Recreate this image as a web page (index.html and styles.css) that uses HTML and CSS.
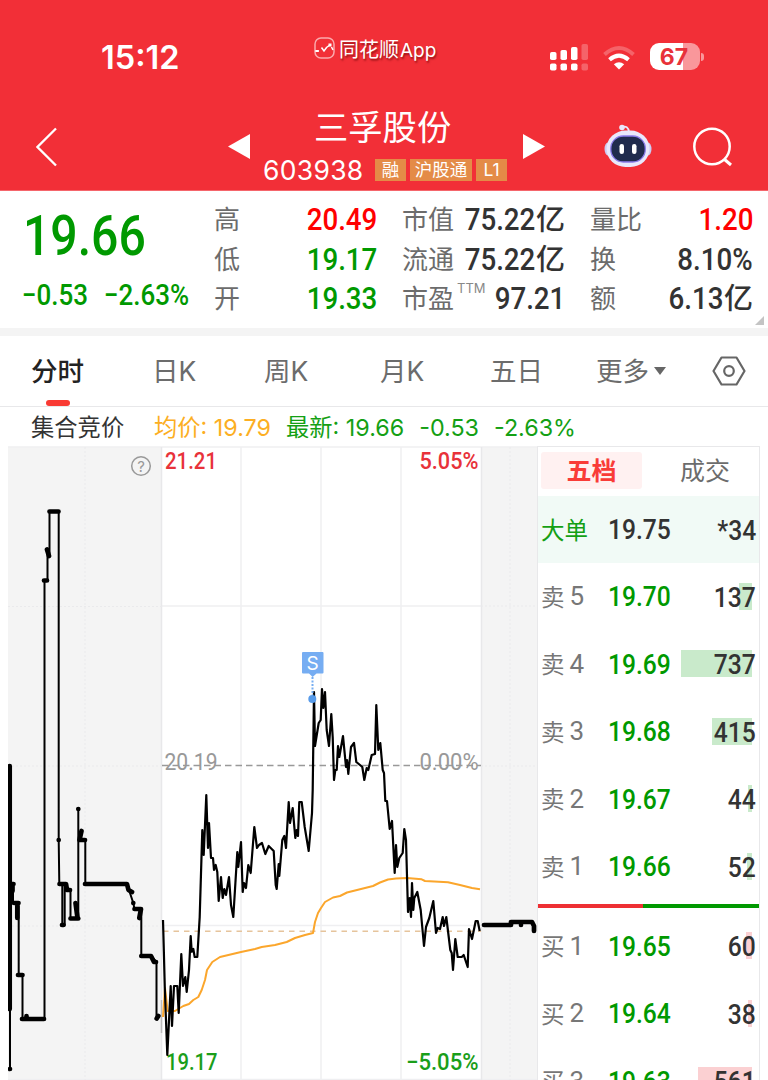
FILE: index.html
```html
<!DOCTYPE html>
<html lang="zh-CN">
<head>
  <meta charset="UTF-8" />
  <meta name="viewport" content="width=device-width, initial-scale=1.0" />
  <title>三孚股份 603938</title>
  <link rel="stylesheet" href="styles.css">
</head>
<body>
  <header class="header">
    <div class="status">
      <span class="time">15:12</span>
      <div class="app-name">
        <svg width="21" height="22" viewBox="0 0 21 22" fill="none">
          <rect x="1" y="1" width="19" height="20" rx="6" stroke="#fba9ac" stroke-width="1.500" />
          <path d="M1.500 14 H5 M7.500 10.500 L10 14 L12.500 10.500 L16 8 M17.500 10 L19 13" stroke="#fff" stroke-width="1.500" />
          <path d="M1.500 13h3v2h-3z M14.500 6.500h3v3h-3z" fill="#fff" />
        </svg>
        <span>同花顺<i>App</i></span>
      </div>
      <svg class="signal" width="38" height="28" viewBox="0 0 38 28" fill="#fff">
        <rect x="0" y="9" width="6.500" height="8" rx="1.800" />
        <rect x="10.500" y="7" width="6.500" height="10" rx="1.800" />
        <rect x="21" y="4" width="6.500" height="13" rx="1.800" />
        <rect x="31.500" y="1" width="6.500" height="16" rx="1.800" opacity=".25" />
        <rect x="0" y="20.500" width="6.500" height="7" rx="1.800" />
        <rect x="10.500" y="20.500" width="6.500" height="7" rx="1.800" />
        <rect x="21" y="20.500" width="6.500" height="7" rx="1.800" />
        <rect x="31.500" y="20.500" width="6.500" height="7" rx="1.800" opacity=".25" />
      </svg>
      <svg class="wifi" width="34" height="26" viewBox="0 0 34 26" fill="none" stroke="#fff" stroke-width="4">
        <path d="M2.500 9.500 Q17 -3.500 31.500 9.500" opacity=".25" />
        <path d="M7.500 14.700 Q17 6.500 26.500 14.700" />
        <path d="M11.800 19.300 Q17 15 22.200 19.300 L17 24.500Z" fill="#fff" stroke="none" />
      </svg>
      <div class="battery">67</div>
    </div>
    <div class="title-bar">
      <svg class="back" width="22" height="40" viewBox="0 0 22 40" fill="none" stroke="#fff" stroke-width="2.300">
        <path d="M20 1.500 L1.500 20 L20 38.500" />
      </svg>
      <svg class="prev" width="22" height="25" viewBox="0 0 22 25"><path d="M0 12.500 L22 0 V25Z" fill="#fff" /></svg>
      <div class="stock">
        <h1>三孚股份</h1>
        <div class="stock-code">
          <span class="code">603938</span>
          <span class="tag">融</span>
          <span class="tag wide">沪股通</span>
          <span class="tag">L1</span>
        </div>
      </div>
      <svg class="next" width="22" height="25" viewBox="0 0 22 25"><path d="M22 12.500 L0 0 V25Z" fill="#fff" /></svg>
      <svg class="robot" width="48" height="44" viewBox="0 0 48 44">
        <path d="M18 3 Q24 1 25 8" fill="none" stroke="#e9e6fb" stroke-width="1.800" />
        <circle cx="18" cy="3.500" r="2.800" fill="#e9e6fb" />
        <ellipse cx="4" cy="25" rx="3.500" ry="6.500" fill="#cdcdf3" />
        <ellipse cx="44" cy="25" rx="3.500" ry="6.500" fill="#cdcdf3" />
        <rect x="2.500" y="6.500" width="43" height="36.500" rx="19" fill="#e9e8fb" />
        <rect x="6.800" y="12" width="34.500" height="26" rx="12.500" fill="#202b4d" stroke="#8a7bea" stroke-width="1.300" />
        <rect x="15.500" y="20" width="4.500" height="10" rx="2.200" fill="#fff" />
        <rect x="28" y="20" width="4.500" height="10" rx="2.200" fill="#fff" />
      </svg>
      <svg class="search" width="40" height="40" viewBox="0 0 40 40" fill="none" stroke="#fff" stroke-width="2.500">
        <circle cx="19" cy="19.500" r="17.700" />
        <path d="M31 32 L38 38" stroke-width="3" />
      </svg>
    </div>
  </header>

  <section class="quote">
    <div class="quote-main">
      <div class="price num">19.66</div>
      <div class="change"><span class="num">−0.53</span><span class="num">−2.63%</span></div>
    </div>
    <div class="stats">
      <div class="stat"><span>高</span><b class="up"><span class="num">20.49</span></b></div>
      <div class="stat"><span>市值</span><b><span class="num">75.22</span>亿</b></div>
      <div class="stat"><span>量比</span><b class="up"><span class="num">1.20</span></b></div>
      <div class="stat"><span>低</span><b class="down"><span class="num">19.17</span></b></div>
      <div class="stat"><span>流通</span><b><span class="num">75.22</span>亿</b></div>
      <div class="stat"><span>换</span><b><span class="num">8.10%</span></b></div>
      <div class="stat"><span>开</span><b class="down"><span class="num">19.33</span></b></div>
      <div class="stat"><span>市盈<sup>TTM</sup></span><b><span class="num">97.21</span></b></div>
      <div class="stat"><span>额</span><b><span class="num">6.13</span>亿</b></div>
    </div>
  </section>

  <nav class="tabs">
    <span class="active">分时</span>
    <span>日K</span>
    <span>周K</span>
    <span>月K</span>
    <span>五日</span>
    <span class="more">更多</span>
    <svg width="34" height="30" viewBox="0 0 34 30" fill="none" stroke="#666" stroke-width="2.200">
      <path d="M9.500 1.500 H24.500 L32.500 15 L24.500 28.500 H9.500 L1.500 15Z" stroke-linejoin="round" />
      <circle cx="17" cy="15" r="4.800" />
    </svg>
  </nav>

  <div class="info">
    <span class="auction">集合竞价</span>
    <span class="avg">均价: 19.79</span>
    <span class="latest">最新: 19.66</span>
    <span class="latest">-0.53</span>
    <span class="latest">-2.63%</span>
  </div>

  <main class="board">
    <svg class="chart" width="529" height="634" viewBox="8 446 529 634">
      <!-- auction sessions -->
      <rect x="8" y="447" width="154" height="632" fill="#f4f4f4" />
      <rect x="481" y="447" width="56" height="632" fill="#f4f4f4" />

      <g fill="none" stroke="#efeff1" stroke-width="1.500">
        <path d="M8 447 H537 M162 606 H481 M162 925.500 H481 M8 1079.500 H537" />
        <path d="M241 447 V1080 M321 447 V1080 M401 447 V1080" />
        <path d="M161.500 447 V1080 M481.500 447 V1080" stroke="#e8e8ea" />
        <path d="M85 447 V1080 M510 447 V1080 M8 606.500 H162 M8 766 H162 M8 926 H162 M481 606 H537 M481 766 H537 M481 926 H537" stroke="#eaeaec" stroke-width="1" stroke-dasharray="2 2" />
      </g>
      <path d="M161.500 1000 V1033" stroke="#bbb" stroke-width="1.500" />
      <path d="M162 765.500 H481" stroke="#999" stroke-width="1.500" stroke-dasharray="6.500 4" />
      <path d="M163 931.300 H481" stroke="#e6c49c" stroke-width="1.500" stroke-dasharray="5.500 5" />

      <g class="axis">
        <text x="165" y="469" textLength="52" lengthAdjust="spacingAndGlyphs" fill="#e8323a">21.21</text>
        <text x="419.500" y="469" textLength="59" lengthAdjust="spacingAndGlyphs" fill="#e8323a">5.05%</text>
        <text class="mid" x="164.500" y="769.500" textLength="53" lengthAdjust="spacingAndGlyphs" fill="#999">20.19</text>
        <text class="mid" x="419.500" y="769.500" textLength="59" lengthAdjust="spacingAndGlyphs" fill="#999">0.00%</text>
        <text x="166" y="1070" textLength="51.500" lengthAdjust="spacingAndGlyphs" fill="#1a9e1a">19.17</text>
        <text x="406" y="1070" textLength="72.500" lengthAdjust="spacingAndGlyphs" fill="#1a9e1a">−5.05%</text>
      </g>

      <g class="help">
        <circle cx="141" cy="466" r="9.300" fill="none" stroke="#999" stroke-width="1.500" />
        <text x="141" y="472" text-anchor="middle">?</text>
      </g>

      <!-- opening auction -->
      <path class="thin" d="M10 765 V1069 M9 884 H13 V903 H18 V918 M18.700 903 V975 H22.500 V1018 H44.500 V580 H47.500 V549 L49.500 556 V512 H58.700 V840 L59.300 884 H62.300 V925 H64.700 V884 L67 890 H70.500 V918 H78.300 V809 V840 H85.300 V884 H127 L133.300 903 L134.500 909 H141.300 V956 H151 L156.500 962 V1018" />
      <path class="thick" d="M9.700 766 V1009 M10 1069 V1069 M11 884 H13.500 M12.500 886 V891 M14 903 H18.500 M17.300 906 V918 M18 975 H22.500 M22 1019 H44 M26.500 1016 V1018 M44 580.500 H47 M47 549.500 L49 556 M49.500 511.500 H58.500 M58.700 840 V840 M59.500 884 H66 L67 890 H70 M62 925 H63.500 M70.500 918.500 H78.300 M75.500 903 L77.500 918 M78.300 809 V809 M81.500 831 L79.500 840 H85 M85 884 H127 L128.500 890 L132 892 M133.300 903 V903 M134.500 909 H141 L139.300 918 M141.300 956 H151 L154 962 H156 M156.700 1018.500 L158.300 1016" />

      <!-- closing auction -->
      <path class="thick" d="M484 925 H511 V922 H532 L534 926 V931 M521 925 V925" />

      <path class="avg-line" d="M163 1017 L165 988 L167.700 1011 L175 1011 L183.300 1006 L189 1004 L193.300 1000 L198.300 997 L201.700 990 L205 980 L207 970 L212.300 962 L220 957 L241 952 L255 949 L261.700 947 L275 945 L286.700 942 L295 938 L305 935 L313 933 L315 922 L318 913 L321 908 L325 902 L333 897.500 L340 896 L347 892.500 L373 886 L380 882.500 L388 879.500 L396 878.500 L407 878 L421.700 879.300 L425 881 L448 882.300 L460 885 L472 888 L480 889.300" />

      <path class="price-line" d="M163 920 L164 957 L164.800 988 L167.300 1055 L170.700 986 L172 1026 L174 986 L177.300 986 L178.700 1013 L181.300 954 L183 986 L185.300 977 L186.700 992 L189 970 L190.700 936 L191.700 951.700 L193.300 949 L194.700 957 L197.300 957 L199.700 917 L202.300 830 L203.700 855 L206.300 795 L208 848 L209 823 L211 858 L213 858 L214 870 L215.700 865 L217.300 872 L218.700 901 L221 877 L222.700 898 L224.300 889 L226 895 L229 877 L231 905 L233.300 917 L237.300 852 L238.300 867 L241 842 L242.700 892 L244 883 L246 888 L248.300 865 L250.700 873 L254.300 827 L257 848 L259 845 L262 843 L265.300 854 L268.700 846 L273.700 851 L275.700 885 L276.700 889 L278.700 864 L279.300 876 L282.300 840 L284.300 836 L286 848 L288.700 802 L290 823 L292.700 808 L295.300 838 L296.700 830 L298 836 L299.300 802 L301.700 802 L304.700 827 L308.700 851 L312 813 L312.700 790 L314 692 L315 746 L318.700 723 L320.700 720 L322 689 L323.300 708 L325 692 L326.700 730 L329 746 L331.300 714 L332.700 737 L334 780 L335.300 770 L336.700 770 L338 746 L339.300 757 L343 736 L346 767 L347 760 L348.300 774 L351 747 L354 743 L356.300 762 L360 765 L362.300 767 L364.300 780 L366.700 768 L368.300 770 L371.700 755 L375 754 L376.300 705 L378.300 750 L380.300 743 L382.700 770 L384 773 L385.300 801 L387 801 L389.700 829 L392 821 L394.700 873 L396 845 L397.300 867 L399.300 858 L402.700 853 L404.300 829 L406 840 L408 912 L409.700 898 L411 917 L412 883 L413.300 910 L414.300 898 L417.300 892 L420.700 910 L424 946 L426 927 L429.300 918 L433.300 901 L436 933 L437.700 928 L440 929 L442.700 917 L444 926 L446.300 917 L450.300 950 L451.700 953 L453 970 L455.300 939 L457.700 957 L461.700 957 L463.700 955 L467.700 967 L469 929 L472 939 L475.700 921 L477.700 921 L479.700 931" />

      <!-- sell marker -->
      <g class="marker">
        <path d="M303 652 H322.500 Q323.500 652 323.500 653 V672.500 Q323.500 673.500 322.500 673.500 H316.500 L312.700 677 L309 673.500 H303 Q302 673.500 302 672.500 V653 Q302 652 303 652Z" fill="#76adf2" />
        <path d="M312.500 677 V695" stroke="#76adf2" stroke-width="2" stroke-dasharray="2 1.500" />
        <circle cx="312.300" cy="699" r="4" fill="#579bea" />
        <text x="312.700" y="669.500" text-anchor="middle">S</text>
      </g>
    </svg>

    <aside class="book">
      <div class="book-tabs">
        <span class="active">五档</span>
        <span>成交</span>
      </div>
      <div class="row big"><span class="side">大单</span><span class="num p">19.75</span><span class="vol"><span class="num">*34</span></span></div>
      <div class="row sell"><span class="side">卖<i>5</i></span><span class="num p">19.70</span><span class="vol"><i class="bar" style="width:13px"></i><span class="num">137</span></span></div>
      <div class="row sell"><span class="side">卖<i>4</i></span><span class="num p">19.69</span><span class="vol"><i class="bar" style="width:71px"></i><span class="num">737</span></span></div>
      <div class="row sell"><span class="side">卖<i>3</i></span><span class="num p">19.68</span><span class="vol"><i class="bar" style="width:40px"></i><span class="num">415</span></span></div>
      <div class="row sell"><span class="side">卖<i>2</i></span><span class="num p">19.67</span><span class="vol"><i class="bar" style="width:4px"></i><span class="num">44</span></span></div>
      <div class="row sell"><span class="side">卖<i>1</i></span><span class="num p">19.66</span><span class="vol"><i class="bar" style="width:5px"></i><span class="num">52</span></span></div>
      <div class="ratio"><i style="width:47.700%"></i></div>
      <div class="row buy"><span class="side">买<i>1</i></span><span class="num p">19.65</span><span class="vol"><i class="bar" style="width:6px"></i><span class="num">60</span></span></div>
      <div class="row buy"><span class="side">买<i>2</i></span><span class="num p">19.64</span><span class="vol"><i class="bar" style="width:4px"></i><span class="num">38</span></span></div>
      <div class="row buy"><span class="side">买<i>3</i></span><span class="num p">19.63</span><span class="vol"><i class="bar" style="width:54px"></i><span class="num">561</span></span></div>
    </aside>
  </main>
</body>
</html>
```
FILE: styles.css
```css
* {
  box-sizing: border-box;
}

body {
  margin: 0;
  width: 768px;
  height: 1080px;
  overflow: hidden;
  background: #fff;
  color: #333;
  font-family: Inter, "Noto Sans CJK SC", sans-serif;
}

i {
  font-style: normal;
}

svg {
  display: block;
  flex: none;
}

/* narrow figures */
.num {
  display: inline-block;
  font-family: Roboto, sans-serif;
  font-weight: 500;
  transform: scaleX(0.88);
  transform-origin: right center;
}

.up {
  color: #f00;
}

.down {
  color: #090;
}

/* header */
.header {
  height: 191px;
  background: #f22f37;
  border-bottom: 1px solid #f5666c;
  color: #fff;
}

.status {
  display: flex;
  height: 108px;
  padding: 37px 0 0 101px;
}

.time {
  width: 213px;
  font-size: 32.5px;
  font-weight: 600;
  line-height: 41px;
}

.app-name {
  display: flex;
  gap: 4px;
  width: 236px;
  font-size: 20px;
  line-height: 26px;
  text-shadow: 1px 2px 2px rgba(90, 0, 0, 0.6);
}

.app-name i {
  margin-left: 1px;
  font-size: 19px;
}

.signal {
  margin-top: 6px;
}

.wifi {
  margin: 8px 0 0 14px;
}

.battery {
  position: relative;
  width: 50px;
  height: 27px;
  margin: 6px 0 0 14px;
  border-radius: 9px;
  background: linear-gradient(90deg, #fff 67%, #f9979b 67%);
  color: #e8323a;
  font-size: 23px;
  font-weight: 700;
  line-height: 28px;
  text-align: center;
  padding-right: 2px;
}

.battery::after {
  content: "";
  position: absolute;
  left: 51px;
  top: 10px;
  width: 3px;
  height: 8px;
  border-radius: 0 3px 3px 0;
  background: #f9979b;
}

.title-bar {
  display: flex;
  height: 82px;
  padding-left: 36px;
}

.back {
  margin: 19px 170px 0 0;
}

.prev,
.next {
  margin-top: 26px;
}

.stock {
  width: 273px;
  padding-left: 13px;
}

.stock h1 {
  margin: 0 0 0 51px;
  font-size: 34.3px;
  font-weight: 400;
  line-height: 39px;
}

.stock-code {
  display: flex;
  align-items: center;
  gap: 4px;
  height: 46px;
}

.code {
  width: 108px;
  font-size: 26.5px;
  letter-spacing: 0.3px;
}

.tag {
  width: 31px;
  height: 22px;
  background: #e48b47;
  font-size: 17.5px;
  line-height: 22px;
  text-align: center;
}

.tag.wide {
  width: 62px;
}

.robot {
  margin: 16px 0 0 59px;
}

.search {
  margin: 19px 0 0 41px;
}

/* quote */
.quote {
  position: relative;
  display: flex;
  height: 145px;
  padding: 9px 0 0 22px;
  border-bottom: 8px solid #f4f4f4;
}

.quote::after {
  content: "";
  position: absolute;
  right: 4px;
  bottom: 3px;
  border: solid transparent;
  border-width: 0 0 9px 9px;
  border-bottom-color: #c4c4c4;
}

.quote-main {
  width: 192px;
  color: #090;
}

.quote-main .num {
  transform-origin: left center;
}

.quote-main .price {
  margin-left: 1px;
  font-size: 56px;
  line-height: 73px;
  transform: scaleX(0.86);
}

.change {
  display: flex;
  font-size: 29.5px;
  line-height: 45px;
}

.change span:first-child {
  width: 82px;
}

.stats {
  display: grid;
  grid-template-columns: 163px 163px 163px;
  grid-auto-rows: 39.5px;
  column-gap: 25px;
  line-height: 39px;
}

.stat {
  display: flex;
  justify-content: space-between;
  font-size: 26px;
  color: #6c6c6c;
  white-space: nowrap;
}

.stat b {
  display: flex;
  gap: 1px;
  color: #333;
  font-size: 29px;
  font-weight: 500;
}

.stat b.up {
  color: #f00;
}

.stat b.down {
  color: #090;
}

.stat .num {
  font-size: 31.5px;
}

.stat sup {
  display: inline-block;
  width: 0;
  margin-left: 3px;
  color: #888;
  font-size: 13px;
  line-height: 0;
  vertical-align: 15px;
}

/* period tabs */
.tabs {
  display: grid;
  grid-template-columns: 121px 112px 116px 110px 106px 116px auto;
  align-items: center;
  height: 71px;
  padding-left: 31px;
  border-bottom: 1px solid #e8e8ea;
  color: #6c6c6c;
  font-size: 26.5px;
  line-height: 70px;
}

.tabs .active {
  position: relative;
  color: #222;
  font-weight: 500;
}

.tabs .active::after {
  content: "";
  position: absolute;
  left: 15px;
  bottom: 0;
  width: 24px;
  height: 6px;
  border-radius: 3px;
  background: #f93a33;
}

.more::after {
  content: "";
  display: inline-block;
  margin-left: 5px;
  border: solid transparent;
  border-width: 8px 6px 0;
  border-top-color: #666;
  vertical-align: 6px;
}

.info {
  display: flex;
  height: 39px;
  padding-left: 31px;
  font-size: 23.3px;
  line-height: 42px;
  white-space: nowrap;
}

.auction {
  width: 123px;
}

.avg {
  width: 132px;
  color: #fcae22;
}

.latest {
  margin-right: 15px;
  color: #14a014;
}

/* chart and order book */
.board {
  display: flex;
  padding-left: 8px;
}

.axis text {
  font: 500 23px Roboto, sans-serif;
}

.axis .mid {
  font-weight: 400;
}

.help text {
  font-size: 15px;
  fill: #999;
}

.thin,
.thick,
.price-line,
.avg-line {
  fill: none;
  stroke: #000;
  stroke-linejoin: round;
}

.thin {
  stroke-width: 2;
}

.thick {
  stroke-width: 4.7;
  stroke-linecap: round;
}

.price-line {
  stroke-width: 2.2;
}

.avg-line {
  stroke: #fba62c;
  stroke-width: 2;
}

.marker text {
  font-size: 19px;
  fill: #fff;
}

.book {
  width: 223px;
  height: 634px;
  overflow: hidden;
  border: solid #e8e8ea;
  border-width: 1px 1px 0;
}

.book-tabs {
  display: flex;
  gap: 38px;
  height: 49px;
  padding: 5px 0 0 3px;
  color: #6c6c6c;
  font-size: 25px;
  line-height: 38px;
}

.book-tabs .active {
  width: 101px;
  height: 37px;
  border-radius: 3px;
  background: #fff1f1;
  color: #f93c38;
  font-weight: 700;
  text-align: center;
}

.row {
  display: flex;
  align-items: center;
  height: 67.5px;
  padding: 0 3px;
  font-size: 28px;
}

.big {
  height: 67px;
  background: #f1faf6;
}

.side {
  display: flex;
  gap: 5px;
  align-items: center;
  width: 67px;
  padding-bottom: 2px;
  color: #777;
  font-size: 23.5px;
}

.side i {
  font-family: Roboto, sans-serif;
  font-size: 26px;
  line-height: 30px;
  padding-top: 1px;
}

.big .side {
  color: #14a014;
}

.p {
  width: 70px;
  color: #090;
  transform-origin: left center;
}

.big .p {
  color: #333;
}

.vol {
  position: relative;
  flex: 1;
  text-align: right;
}

.bar {
  position: absolute;
  right: 4px;
  top: 3px;
  height: 27px;
  background: #c9eacb;
}

.buy .bar {
  background: #fbd0d2;
}

.ratio {
  height: 4px;
  margin: 3px -1px 5px;
  background: #090;
}

.ratio i {
  display: block;
  height: 4px;
  background: #ee2f33;
}
```
